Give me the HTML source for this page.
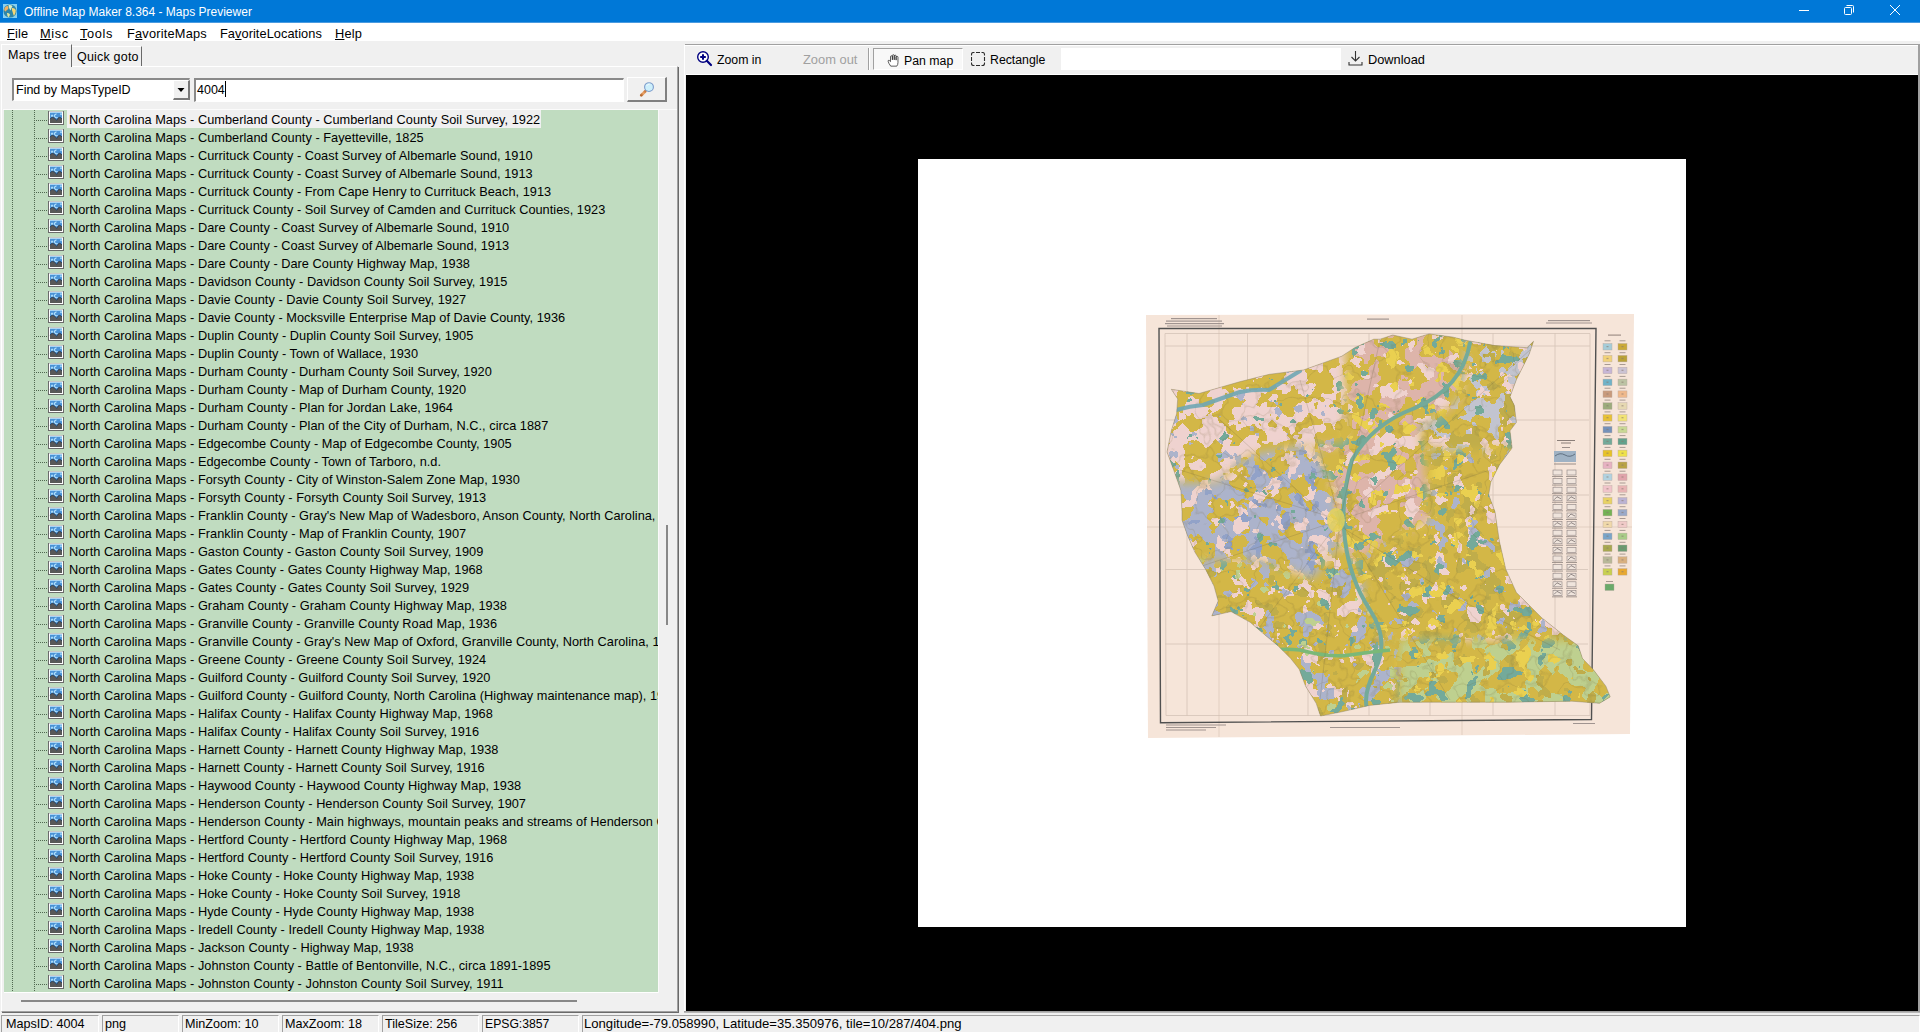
<!DOCTYPE html>
<html><head><meta charset="utf-8"><title>Offline Map Maker</title>
<style>
*{margin:0;padding:0;box-sizing:border-box}
html,body{width:1920px;height:1032px;overflow:hidden;background:#f0f0f0;font-family:"Liberation Sans",sans-serif;color:#000;position:relative}
.a{position:absolute}
.nw{white-space:nowrap}
#title{left:0;top:0;width:1920px;height:22px;background:#0078d7;color:#fff;font-size:12px}
#menu{left:0;top:23px;width:1920px;height:18px;background:#fff;font-size:12.8px;letter-spacing:0.2px}
#menu span{position:absolute;top:3px;white-space:nowrap}
.tb{font-size:12.3px;white-space:nowrap;position:absolute}
#tree{left:4px;top:110px;width:654px;height:882px;background:#c0dcc0;overflow:hidden}
.row{position:absolute;left:0;width:654px;height:18px}
.row .tx{position:absolute;left:65px;top:2px;font-size:12.75px;letter-spacing:0.03px;white-space:nowrap;line-height:15px}
.row .hl{position:absolute;left:63px;top:0;width:474px;height:18px;background:#f0f0f0}
.row .hd{position:absolute;left:32px;top:10px;width:11px;height:1px;background:repeating-linear-gradient(90deg,#506850 0 1px,transparent 1px 2px)}
.vd{position:absolute;top:0;width:1px;height:882px;background:repeating-linear-gradient(180deg,#506850 0 1px,transparent 1px 2px)}
.ic{position:absolute;left:44px;top:1px;width:16px;height:14px}
.st{position:absolute;top:1015px;height:17px;border-top:1px solid #a0a0a0;border-left:1px solid #a0a0a0;border-right:1px solid #fff;font-size:12.5px;white-space:nowrap}
.st span{position:absolute;left:5px;top:2px}
</style></head><body>
<svg width="0" height="0" style="position:absolute"><defs>
<symbol id="mi" viewBox="0 0 16 14">
<rect x="0" y="0" width="16" height="14" fill="#6a6a6a"/>
<rect x="1" y="0" width="14" height="1" fill="#c8c8c8"/>
<rect x="1" y="1" width="14" height="12" fill="#fff"/>
<rect x="2" y="1" width="12" height="11" fill="#4a92d6"/>
<rect x="2" y="1" width="12" height="1" fill="#a8d4f4"/>
<path d="M4.1 3.6 V6 M2.9 4.8 H5.3" stroke="#b8e6ff" stroke-width="1"/>
<path d="M8.6 3 a1.9 1.9 0 1 0 1 3.4" stroke="#b8e6ff" stroke-width="1.1" fill="none"/>
<path d="M13 2.2 V4.2 M12 3.2 H14" stroke="#b8e6ff" stroke-width="0.8"/>
<path d="M2 12 V8.2 Q3.2 6.3 4.6 6.3 Q6.5 6.5 8.9 9.4 Q10 6.4 11.4 6.3 Q13 6.5 14 8 V12 Z" fill="#585858"/><path d="M2 8.2 Q3.2 6.3 4.6 6.3 Q6.5 6.5 8.9 9.4 Q10 6.4 11.4 6.3 Q13 6.5 14 8" fill="none" stroke="#203048" stroke-width="0.7"/>
</symbol>
</defs></svg>
<div id="title" class="a"><div class="a" style="left:0;top:22px;width:1920px;height:1px;background:#4a9be0"></div>
<svg class="a" style="left:3px;top:4px" width="14" height="14" viewBox="0 0 14 14">
<rect x="0" y="0" width="14" height="14" fill="#86d0f2"/>
<circle cx="7" cy="7" r="6.6" fill="#2f86a8"/>
<path d="M1.2 5 Q2 2.2 4.5 1.8 Q6 3 5.2 5 Q3.5 6 2.5 7.5 Q1.3 7 1.2 5Z" fill="#f0b060"/>
<path d="M5.5 1 Q8 0.6 9.5 2 Q8.5 4 7.5 6.5 Q6.5 5 5.8 3Z" fill="#d8eec8"/>
<path d="M9 4 Q11.5 3.5 12.8 6 Q13 9.5 11 12 Q10 10 9.6 8 Q8.6 6 9 4Z" fill="#f3d676"/>
<path d="M4 9 Q6 8.5 7 10.5 Q6.5 12.5 5.5 13.3 Q4 12 4 9Z" fill="#e2e6a0"/>
</svg>
<div class="a nw" style="left:24px;top:5px;font-size:12px;line-height:14px">Offline Map Maker 8.364 - Maps Previewer</div>
<svg class="a" style="left:1792px;top:0" width="128" height="22" viewBox="0 0 128 22">
<rect x="7" y="10" width="10" height="1" fill="#fff"/>
<rect x="52.5" y="7.5" width="7" height="7" fill="none" stroke="#fff" rx="1"/>
<path d="M54.5 5.5 H60.5 Q61.5 5.5 61.5 6.5 V12.5" fill="none" stroke="#fff"/>
<path d="M98 5 L108 15 M108 5 L98 15" stroke="#fff" stroke-width="1"/>
</svg>
</div>
<div id="menu" class="a">
<span style="left:7px"><u>F</u>ile</span>
<span style="left:40px;letter-spacing:0.6px"><u>M</u>isc</span>
<span style="left:80px;letter-spacing:0.6px"><u>T</u>ools</span>
<span style="left:127px">F<u>a</u>voriteMaps</span>
<span style="left:220px;letter-spacing:0.05px">Fa<u>v</u>oriteLocations</span>
<span style="left:335px"><u>H</u>elp</span>
</div>

<div class="a" style="left:0;top:41px;width:1920px;height:4px;background:#f0f0f0"></div>
<!-- tab page frame -->
<div class="a" style="left:1px;top:66px;width:677px;height:946px;border-top:1px solid #fff;border-left:1px solid #fff;border-right:1px solid #a0a0a0;border-bottom:1px solid #a0a0a0;box-shadow:1px 1px 0 #6a6a6a"></div>
<!-- active tab -->
<div class="a" style="left:1px;top:44px;width:71px;height:23px;background:#f0f0f0;border-top:1px solid #fff;border-left:1px solid #fff;border-right:1px solid #696969"></div>
<div class="a nw" style="left:8px;top:48px;font-size:12.5px;letter-spacing:0.35px;line-height:14px">Maps tree</div>
<!-- inactive tab -->
<div class="a" style="left:72px;top:46px;width:70px;height:20px;background:#f0f0f0;border-top:1px solid #fff;border-right:1px solid #696969;border-right-width:1px"></div>
<div class="a nw" style="left:77px;top:50px;font-size:12.5px;letter-spacing:0.2px;line-height:14px">Quick goto</div>
<!-- combo -->
<div class="a" style="left:12px;top:78px;width:178px;height:23px;background:#fff;border-top:2px solid #8a8a8a;border-left:2px solid #8a8a8a;border-bottom:1px solid #fff;border-right:1px solid #e8e8e8"></div>
<div class="a nw" style="left:16px;top:83px;font-size:12.5px;line-height:14px">Find by MapsTypeID</div>
<div class="a" style="left:173px;top:80px;width:17px;height:20px;background:#f0f0f0;border-top:1px solid #fff;border-left:1px solid #fff;border-right:2px solid #787878;border-bottom:2px solid #787878"></div>
<svg class="a" style="left:177px;top:88px" width="8" height="4" viewBox="0 0 8 4"><path d="M0.5 0 H7.5 L4 4Z" fill="#000"/></svg>
<!-- edit -->
<div class="a" style="left:194px;top:78px;width:430px;height:24px;background:#fff;border-top:2px solid #8a8a8a;border-left:2px solid #8a8a8a;border-bottom:1px solid #fff;border-right:1px solid #fff"></div>
<div class="a nw" style="left:197px;top:83px;font-size:12.5px;line-height:14px">4004</div>
<div class="a" style="left:225px;top:81px;width:1px;height:16px;background:#000"></div>
<!-- search button -->
<div class="a" style="left:627px;top:77px;width:40px;height:25px;background:#f0f0f0;border-top:1px solid #fff;border-left:1px solid #fff;border-right:2px solid #808080;border-bottom:2px solid #808080"></div>
<svg class="a" style="left:638px;top:81px" width="18" height="18" viewBox="0 0 18 18">
<defs><linearGradient id="hg" x1="0" y1="1" x2="1" y2="0"><stop offset="0" stop-color="#b86a30"/><stop offset="0.5" stop-color="#eca468"/><stop offset="1" stop-color="#c87a40"/></linearGradient></defs>
<path d="M3.3 14.3 L7.3 10.3" stroke="url(#hg)" stroke-width="2.8" stroke-linecap="round"/>
<circle cx="11" cy="6.1" r="4.4" fill="#cdeffb" stroke="#7b9bcb" stroke-width="1.1"/>
<path d="M8.6 5 Q9.5 3 11.8 3" stroke="#fff" stroke-width="0.9" fill="none" opacity="0.7"/>
</svg>

<div id="tree" class="a">
<div class="vd" style="left:8px"></div><div class="vd" style="left:30px"></div>
<div class="row" style="top:0px"><div class="hl"></div><div class="hd"></div><svg class="ic" width="16" height="14" viewBox="0 0 16 14"><use href="#mi"/></svg><div class="tx">North Carolina Maps - Cumberland County - Cumberland County Soil Survey, 1922</div></div>
<div class="row" style="top:18px"><div class="hd"></div><svg class="ic" width="16" height="14" viewBox="0 0 16 14"><use href="#mi"/></svg><div class="tx">North Carolina Maps - Cumberland County - Fayetteville, 1825</div></div>
<div class="row" style="top:36px"><div class="hd"></div><svg class="ic" width="16" height="14" viewBox="0 0 16 14"><use href="#mi"/></svg><div class="tx">North Carolina Maps - Currituck County - Coast Survey of Albemarle Sound, 1910</div></div>
<div class="row" style="top:54px"><div class="hd"></div><svg class="ic" width="16" height="14" viewBox="0 0 16 14"><use href="#mi"/></svg><div class="tx">North Carolina Maps - Currituck County - Coast Survey of Albemarle Sound, 1913</div></div>
<div class="row" style="top:72px"><div class="hd"></div><svg class="ic" width="16" height="14" viewBox="0 0 16 14"><use href="#mi"/></svg><div class="tx">North Carolina Maps - Currituck County - From Cape Henry to Currituck Beach, 1913</div></div>
<div class="row" style="top:90px"><div class="hd"></div><svg class="ic" width="16" height="14" viewBox="0 0 16 14"><use href="#mi"/></svg><div class="tx">North Carolina Maps - Currituck County - Soil Survey of Camden and Currituck Counties, 1923</div></div>
<div class="row" style="top:108px"><div class="hd"></div><svg class="ic" width="16" height="14" viewBox="0 0 16 14"><use href="#mi"/></svg><div class="tx">North Carolina Maps - Dare County - Coast Survey of Albemarle Sound, 1910</div></div>
<div class="row" style="top:126px"><div class="hd"></div><svg class="ic" width="16" height="14" viewBox="0 0 16 14"><use href="#mi"/></svg><div class="tx">North Carolina Maps - Dare County - Coast Survey of Albemarle Sound, 1913</div></div>
<div class="row" style="top:144px"><div class="hd"></div><svg class="ic" width="16" height="14" viewBox="0 0 16 14"><use href="#mi"/></svg><div class="tx">North Carolina Maps - Dare County - Dare County Highway Map, 1938</div></div>
<div class="row" style="top:162px"><div class="hd"></div><svg class="ic" width="16" height="14" viewBox="0 0 16 14"><use href="#mi"/></svg><div class="tx">North Carolina Maps - Davidson County - Davidson County Soil Survey, 1915</div></div>
<div class="row" style="top:180px"><div class="hd"></div><svg class="ic" width="16" height="14" viewBox="0 0 16 14"><use href="#mi"/></svg><div class="tx">North Carolina Maps - Davie County - Davie County Soil Survey, 1927</div></div>
<div class="row" style="top:198px"><div class="hd"></div><svg class="ic" width="16" height="14" viewBox="0 0 16 14"><use href="#mi"/></svg><div class="tx">North Carolina Maps - Davie County - Mocksville Enterprise Map of Davie County, 1936</div></div>
<div class="row" style="top:216px"><div class="hd"></div><svg class="ic" width="16" height="14" viewBox="0 0 16 14"><use href="#mi"/></svg><div class="tx">North Carolina Maps - Duplin County - Duplin County Soil Survey, 1905</div></div>
<div class="row" style="top:234px"><div class="hd"></div><svg class="ic" width="16" height="14" viewBox="0 0 16 14"><use href="#mi"/></svg><div class="tx">North Carolina Maps - Duplin County - Town of Wallace, 1930</div></div>
<div class="row" style="top:252px"><div class="hd"></div><svg class="ic" width="16" height="14" viewBox="0 0 16 14"><use href="#mi"/></svg><div class="tx">North Carolina Maps - Durham County - Durham County Soil Survey, 1920</div></div>
<div class="row" style="top:270px"><div class="hd"></div><svg class="ic" width="16" height="14" viewBox="0 0 16 14"><use href="#mi"/></svg><div class="tx">North Carolina Maps - Durham County - Map of Durham County, 1920</div></div>
<div class="row" style="top:288px"><div class="hd"></div><svg class="ic" width="16" height="14" viewBox="0 0 16 14"><use href="#mi"/></svg><div class="tx">North Carolina Maps - Durham County - Plan for Jordan Lake, 1964</div></div>
<div class="row" style="top:306px"><div class="hd"></div><svg class="ic" width="16" height="14" viewBox="0 0 16 14"><use href="#mi"/></svg><div class="tx">North Carolina Maps - Durham County - Plan of the City of Durham, N.C., circa 1887</div></div>
<div class="row" style="top:324px"><div class="hd"></div><svg class="ic" width="16" height="14" viewBox="0 0 16 14"><use href="#mi"/></svg><div class="tx">North Carolina Maps - Edgecombe County - Map of Edgecombe County, 1905</div></div>
<div class="row" style="top:342px"><div class="hd"></div><svg class="ic" width="16" height="14" viewBox="0 0 16 14"><use href="#mi"/></svg><div class="tx">North Carolina Maps - Edgecombe County - Town of Tarboro, n.d.</div></div>
<div class="row" style="top:360px"><div class="hd"></div><svg class="ic" width="16" height="14" viewBox="0 0 16 14"><use href="#mi"/></svg><div class="tx">North Carolina Maps - Forsyth County - City of Winston-Salem Zone Map, 1930</div></div>
<div class="row" style="top:378px"><div class="hd"></div><svg class="ic" width="16" height="14" viewBox="0 0 16 14"><use href="#mi"/></svg><div class="tx">North Carolina Maps - Forsyth County - Forsyth County Soil Survey, 1913</div></div>
<div class="row" style="top:396px"><div class="hd"></div><svg class="ic" width="16" height="14" viewBox="0 0 16 14"><use href="#mi"/></svg><div class="tx">North Carolina Maps - Franklin County - Gray&#x27;s New Map of Wadesboro, Anson County, North Carolina, 1881</div></div>
<div class="row" style="top:414px"><div class="hd"></div><svg class="ic" width="16" height="14" viewBox="0 0 16 14"><use href="#mi"/></svg><div class="tx">North Carolina Maps - Franklin County - Map of Franklin County, 1907</div></div>
<div class="row" style="top:432px"><div class="hd"></div><svg class="ic" width="16" height="14" viewBox="0 0 16 14"><use href="#mi"/></svg><div class="tx">North Carolina Maps - Gaston County - Gaston County Soil Survey, 1909</div></div>
<div class="row" style="top:450px"><div class="hd"></div><svg class="ic" width="16" height="14" viewBox="0 0 16 14"><use href="#mi"/></svg><div class="tx">North Carolina Maps - Gates County - Gates County Highway Map, 1968</div></div>
<div class="row" style="top:468px"><div class="hd"></div><svg class="ic" width="16" height="14" viewBox="0 0 16 14"><use href="#mi"/></svg><div class="tx">North Carolina Maps - Gates County - Gates County Soil Survey, 1929</div></div>
<div class="row" style="top:486px"><div class="hd"></div><svg class="ic" width="16" height="14" viewBox="0 0 16 14"><use href="#mi"/></svg><div class="tx">North Carolina Maps - Graham County - Graham County Highway Map, 1938</div></div>
<div class="row" style="top:504px"><div class="hd"></div><svg class="ic" width="16" height="14" viewBox="0 0 16 14"><use href="#mi"/></svg><div class="tx">North Carolina Maps - Granville County - Granville County Road Map, 1936</div></div>
<div class="row" style="top:522px"><div class="hd"></div><svg class="ic" width="16" height="14" viewBox="0 0 16 14"><use href="#mi"/></svg><div class="tx">North Carolina Maps - Granville County - Gray&#x27;s New Map of Oxford, Granville County, North Carolina, 1882</div></div>
<div class="row" style="top:540px"><div class="hd"></div><svg class="ic" width="16" height="14" viewBox="0 0 16 14"><use href="#mi"/></svg><div class="tx">North Carolina Maps - Greene County - Greene County Soil Survey, 1924</div></div>
<div class="row" style="top:558px"><div class="hd"></div><svg class="ic" width="16" height="14" viewBox="0 0 16 14"><use href="#mi"/></svg><div class="tx">North Carolina Maps - Guilford County - Guilford County Soil Survey, 1920</div></div>
<div class="row" style="top:576px"><div class="hd"></div><svg class="ic" width="16" height="14" viewBox="0 0 16 14"><use href="#mi"/></svg><div class="tx">North Carolina Maps - Guilford County - Guilford County, North Carolina (Highway maintenance map), 1930</div></div>
<div class="row" style="top:594px"><div class="hd"></div><svg class="ic" width="16" height="14" viewBox="0 0 16 14"><use href="#mi"/></svg><div class="tx">North Carolina Maps - Halifax County - Halifax County Highway Map, 1968</div></div>
<div class="row" style="top:612px"><div class="hd"></div><svg class="ic" width="16" height="14" viewBox="0 0 16 14"><use href="#mi"/></svg><div class="tx">North Carolina Maps - Halifax County - Halifax County Soil Survey, 1916</div></div>
<div class="row" style="top:630px"><div class="hd"></div><svg class="ic" width="16" height="14" viewBox="0 0 16 14"><use href="#mi"/></svg><div class="tx">North Carolina Maps - Harnett County - Harnett County Highway Map, 1938</div></div>
<div class="row" style="top:648px"><div class="hd"></div><svg class="ic" width="16" height="14" viewBox="0 0 16 14"><use href="#mi"/></svg><div class="tx">North Carolina Maps - Harnett County - Harnett County Soil Survey, 1916</div></div>
<div class="row" style="top:666px"><div class="hd"></div><svg class="ic" width="16" height="14" viewBox="0 0 16 14"><use href="#mi"/></svg><div class="tx">North Carolina Maps - Haywood County - Haywood County Highway Map, 1938</div></div>
<div class="row" style="top:684px"><div class="hd"></div><svg class="ic" width="16" height="14" viewBox="0 0 16 14"><use href="#mi"/></svg><div class="tx">North Carolina Maps - Henderson County - Henderson County Soil Survey, 1907</div></div>
<div class="row" style="top:702px"><div class="hd"></div><svg class="ic" width="16" height="14" viewBox="0 0 16 14"><use href="#mi"/></svg><div class="tx">North Carolina Maps - Henderson County - Main highways, mountain peaks and streams of Henderson County</div></div>
<div class="row" style="top:720px"><div class="hd"></div><svg class="ic" width="16" height="14" viewBox="0 0 16 14"><use href="#mi"/></svg><div class="tx">North Carolina Maps - Hertford County - Hertford County Highway Map, 1968</div></div>
<div class="row" style="top:738px"><div class="hd"></div><svg class="ic" width="16" height="14" viewBox="0 0 16 14"><use href="#mi"/></svg><div class="tx">North Carolina Maps - Hertford County - Hertford County Soil Survey, 1916</div></div>
<div class="row" style="top:756px"><div class="hd"></div><svg class="ic" width="16" height="14" viewBox="0 0 16 14"><use href="#mi"/></svg><div class="tx">North Carolina Maps - Hoke County - Hoke County Highway Map, 1938</div></div>
<div class="row" style="top:774px"><div class="hd"></div><svg class="ic" width="16" height="14" viewBox="0 0 16 14"><use href="#mi"/></svg><div class="tx">North Carolina Maps - Hoke County - Hoke County Soil Survey, 1918</div></div>
<div class="row" style="top:792px"><div class="hd"></div><svg class="ic" width="16" height="14" viewBox="0 0 16 14"><use href="#mi"/></svg><div class="tx">North Carolina Maps - Hyde County - Hyde County Highway Map, 1938</div></div>
<div class="row" style="top:810px"><div class="hd"></div><svg class="ic" width="16" height="14" viewBox="0 0 16 14"><use href="#mi"/></svg><div class="tx">North Carolina Maps - Iredell County - Iredell County Highway Map, 1938</div></div>
<div class="row" style="top:828px"><div class="hd"></div><svg class="ic" width="16" height="14" viewBox="0 0 16 14"><use href="#mi"/></svg><div class="tx">North Carolina Maps - Jackson County - Highway Map, 1938</div></div>
<div class="row" style="top:846px"><div class="hd"></div><svg class="ic" width="16" height="14" viewBox="0 0 16 14"><use href="#mi"/></svg><div class="tx">North Carolina Maps - Johnston County - Battle of Bentonville, N.C., circa 1891-1895</div></div>
<div class="row" style="top:864px"><div class="hd"></div><svg class="ic" width="16" height="14" viewBox="0 0 16 14"><use href="#mi"/></svg><div class="tx">North Carolina Maps - Johnston County - Johnston County Soil Survey, 1911</div></div>
</div>

<!-- tree extra borders -->
<div class="a" style="left:3px;top:109px;width:674px;height:1px;background:#fbfbfb"></div>
<div class="a" style="left:4px;top:992px;width:655px;height:1px;background:#fff"></div>
<div class="a" style="left:658px;top:110px;width:1px;height:883px;background:#fafafa"></div>
<!-- vscroll thumb -->
<div class="a" style="left:666px;top:525px;width:2px;height:100px;background:#888"></div>
<!-- hscroll thumb -->
<div class="a" style="left:21px;top:1000px;width:556px;height:2px;background:#888"></div>
<!-- toolbar -->
<div class="a" style="left:685px;top:44px;width:1234px;height:1px;background:#a0a0a0"></div>
<div class="a" style="left:685px;top:45px;width:1234px;height:1px;background:#fff"></div>
<div class="a" style="left:684px;top:45px;width:1px;height:967px;background:#fff"></div>
<div class="a" style="left:686px;top:74px;width:1232px;height:1px;background:#fff"></div>
<div class="a" style="left:1918px;top:44px;width:2px;height:968px;background:#a0a0a0"></div>
<svg class="a" style="left:696px;top:50px" width="18" height="18" viewBox="0 0 18 18">
<circle cx="7" cy="7" r="5.3" fill="#fff" stroke="#000080" stroke-width="1.4"/>
<path d="M4.2 7 H9.8 M7 4.2 V9.8" stroke="#000080" stroke-width="2"/>
<path d="M10.8 10.8 L15 15" stroke="#000080" stroke-width="2.2" stroke-linecap="round"/>
</svg>
<div class="tb" style="left:717px;top:53px">Zoom in</div>
<div class="tb" style="left:803px;top:52px;color:#a0a0a0;font-size:12.9px">Zoom out</div>
<div class="a" style="left:868px;top:48px;width:1px;height:22px;background:#a0a0a0"></div>
<div class="a" style="left:869px;top:48px;width:1px;height:22px;background:#fff"></div>
<!-- pressed pan button -->
<div class="a" style="left:873px;top:48px;width:90px;height:22px;background:#f8f8f8;border-top:1px solid #a0a0a0;border-left:1px solid #a0a0a0;border-right:1px solid #fff;border-bottom:1px solid #fff"></div>
<svg class="a" style="left:886.5px;top:54px" width="13" height="13.5" viewBox="0 0 14 15" preserveAspectRatio="none">
<path d="M4 13.5 Q1.5 10 1.2 8 Q1 6.8 2.3 7 L3.8 8.5 V3 Q3.8 2 4.8 2 Q5.8 2 5.8 3 V6.5 V1.8 Q5.8 0.8 6.8 0.8 Q7.8 0.8 7.8 1.8 V6.5 V2.3 Q7.8 1.3 8.8 1.3 Q9.8 1.3 9.8 2.3 V6.8 V3.5 Q9.8 2.6 10.8 2.6 Q11.8 2.6 11.8 3.5 V9.5 Q11.8 12 10.5 13.5 Z" fill="#fff" stroke="#222" stroke-width="0.8"/>
</svg>
<div class="tb" style="left:904px;top:54px">Pan map</div>
<svg class="a" style="left:971px;top:52px" width="15" height="15" viewBox="0 0 15 15">
<path d="M0.5 3.5 V2.5 Q0.5 0.5 2.5 0.5 H3.5 M10.5 0.5 H11.5 Q13.5 0.5 13.5 2.5 V3.5 M13.5 10.5 V11.5 Q13.5 13.5 11.5 13.5 H10.5 M3.5 13.5 H2.5 Q0.5 13.5 0.5 11.5 V10.5 M5 0.5 H9 M13.5 5 V9 M5 13.5 H9 M0.5 5 V9" fill="none" stroke="#2a2a2a" stroke-width="1.1"/>
</svg>
<div class="tb" style="left:990px;top:53px">Rectangle</div>
<div class="a" style="left:1061px;top:48px;width:280px;height:22px;background:#fff"></div>
<svg class="a" style="left:1348px;top:50px" width="16" height="17" viewBox="0 0 16 17">
<path d="M7.5 1 V11 M3.5 7 L7.5 11 L11.5 7" stroke="#333" stroke-width="1.1" fill="none"/>
<path d="M1 12 V15 H14 V12" stroke="#333" stroke-width="1.1" fill="none"/>
</svg>
<div class="tb" style="left:1368px;top:52px;font-size:12.8px">Download</div>
<!-- map canvas -->
<div class="a" style="left:686px;top:75px;width:1232px;height:936px;background:#000"></div>
<div class="a" style="left:684px;top:1011px;width:1236px;height:1px;background:#a0a0a0"></div>
<div class="a" style="left:918px;top:159px;width:768px;height:768px;background:#fff"></div>

<div class="a" style="left:684px;top:1012px;width:1236px;height:1px;background:#b8b8b8"></div>
<div class="st" style="left:1px;width:98px;font-size:12.6px"><span style="line-height:14px;left:4px;top:1px">MapsID: 4004</span></div>
<div class="st" style="left:102px;width:77px;font-size:12.6px"><span style="line-height:14px;left:2px;top:1px">png</span></div>
<div class="st" style="left:182px;width:97px;font-size:12.6px"><span style="line-height:14px;left:2px;top:1px">MinZoom: 10</span></div>
<div class="st" style="left:282px;width:97px;font-size:12.6px"><span style="line-height:14px;left:2px;top:1px">MaxZoom: 18</span></div>
<div class="st" style="left:382px;width:97px;font-size:12.6px"><span style="line-height:14px;left:2px;top:1px">TileSize: 256</span></div>
<div class="st" style="left:482px;width:97px;font-size:12.2px"><span style="line-height:14px;left:2px;top:1px">EPSG:3857</span></div>
<div class="st" style="left:582px;width:1338px;font-size:13.1px"><span style="line-height:14px;left:1px;top:1px">Longitude=-79.058990, Latitude=35.350976, tile=10/287/404.png</span></div>
<svg class="a" style="left:918px;top:159px" width="768" height="768" viewBox="918 159 768 768">
<defs><clipPath id="cc"><polygon points="1171.3,389.3 1199.0,393.5 1239.5,381.8 1269.4,374.3 1303.5,370.0 1341.8,356.2 1354.6,347.7 1373.8,339.2 1380.0,339.2 1392.8,335.0 1412.0,339.2 1429.0,333.9 1452.5,337.0 1465.3,340.2 1495.0,345.6 1527.0,347.7 1533.5,341.3 1529.2,354.1 1516.4,379.7 1510.0,396.7 1514.3,405.3 1516.4,422.3 1510.0,430.8 1512.1,447.9 1499.4,464.9 1490.8,482.0 1488.7,494.8 1495.0,511.8 1499.4,541.3 1505.7,569.0 1516.4,592.5 1529.2,605.3 1542.0,618.0 1563.3,635.0 1578.2,645.7 1582.5,658.5 1593.0,669.2 1605.9,686.2 1610.2,696.9 1599.5,703.3 1571.8,701.2 1507.9,702.2 1443.9,702.2 1400.0,702.2 1369.5,705.4 1341.8,711.8 1320.5,716.0 1316.2,703.3 1305.6,686.2 1299.2,669.2 1290.7,658.5 1277.9,645.7 1265.0,635.0 1250.2,622.3 1231.0,611.6 1211.8,615.9 1218.2,601.0 1214.0,586.0 1205.4,569.0 1194.8,552.0 1187.3,534.9 1182.0,520.0 1182.0,511.8 1180.9,490.5 1173.4,469.2 1167.0,452.0 1171.3,430.8 1176.6,413.8 1177.7,398.9"/></clipPath><filter id="bl" x="1100" y="300" width="560" height="460" filterUnits="userSpaceOnUse"><feGaussianBlur stdDeviation="5"/></filter><mask id="znw" maskUnits="userSpaceOnUse" x="1100" y="300" width="560" height="460"><polygon points="1160.0,330.0 1345.0,330.0 1345.0,445.0 1300.0,448.0 1250.0,455.0 1217.0,483.0 1160.0,483.0" fill="#fff" filter="url(#bl)"/></mask><mask id="zgray" maskUnits="userSpaceOnUse" x="1100" y="300" width="560" height="460"><polygon points="1160.0,483.0 1217.0,483.0 1250.0,455.0 1313.0,444.0 1335.0,492.0 1339.0,544.0 1313.0,579.0 1261.0,561.0 1160.0,560.0" fill="#fff" filter="url(#bl)"/></mask><mask id="zsw" maskUnits="userSpaceOnUse" x="1100" y="300" width="560" height="460"><polygon points="1160.0,560.0 1261.0,561.0 1313.0,579.0 1339.0,544.0 1355.0,560.0 1380.0,640.0 1400.0,640.0 1400.0,725.0 1160.0,725.0" fill="#fff" filter="url(#bl)"/></mask><mask id="zcn" maskUnits="userSpaceOnUse" x="1100" y="300" width="560" height="460"><polygon points="1345.0,330.0 1470.0,330.0 1460.0,400.0 1420.0,430.0 1430.0,520.0 1355.0,560.0 1339.0,544.0 1335.0,492.0 1313.0,444.0 1345.0,445.0" fill="#fff" filter="url(#bl)"/></mask><mask id="zne" maskUnits="userSpaceOnUse" x="1100" y="300" width="560" height="460"><polygon points="1470.0,330.0 1620.0,330.0 1620.0,450.0 1430.0,450.0 1420.0,430.0 1460.0,400.0" fill="#fff" filter="url(#bl)"/></mask><mask id="ze" maskUnits="userSpaceOnUse" x="1100" y="300" width="560" height="460"><polygon points="1430.0,450.0 1620.0,450.0 1620.0,640.0 1400.0,640.0 1380.0,640.0 1355.0,560.0 1430.0,520.0" fill="#fff" filter="url(#bl)"/></mask><mask id="zse" maskUnits="userSpaceOnUse" x="1100" y="300" width="560" height="460"><polygon points="1400.0,640.0 1620.0,640.0 1620.0,725.0 1400.0,725.0" fill="#fff" filter="url(#bl)"/></mask><filter id="ct" x="1150" y="320" width="480" height="410" filterUnits="userSpaceOnUse" color-interpolation-filters="sRGB"><feTurbulence type="fractalNoise" baseFrequency="0.035" numOctaves="3" seed="99"/><feColorMatrix type="matrix" values="0 0 0 0 0.45 0 0 0 0 0.40 0 0 0 0 0.22 1 0 0 0 0"/><feComponentTransfer><feFuncA type="table" tableValues="0 0 0 0 0 0 0 0 0 0 0 0 0 0 0 1 0 0 0 0 0 0 0 0 0 0 0 0 0 0"/></feComponentTransfer></filter><filter id="ct2" x="1150" y="320" width="480" height="410" filterUnits="userSpaceOnUse" color-interpolation-filters="sRGB"><feTurbulence type="fractalNoise" baseFrequency="0.06" numOctaves="2" seed="57"/><feColorMatrix type="matrix" values="0 0 0 0 0.42 0 0 0 0 0.45 0 0 0 0 0.55 1 0 0 0 0"/><feComponentTransfer><feFuncA type="table" tableValues="0 0 0 0 0 0 0 0 0 0 0.8 0 0 0 0 0 0 0 0 0 0"/></feComponentTransfer></filter><filter id="f0" x="1150" y="320" width="480" height="410" filterUnits="userSpaceOnUse" color-interpolation-filters="sRGB"><feTurbulence type="fractalNoise" baseFrequency="0.054" numOctaves="3" seed="11"/><feColorMatrix type="matrix" values="0 0 0 0 0.937 0 0 0 0 0.824 0 0 0 0 0.812 8 0 0 0 -3.374"/><feComponentTransfer><feFuncA type="discrete" tableValues="0 1"/></feComponentTransfer></filter><filter id="f1" x="1150" y="320" width="480" height="410" filterUnits="userSpaceOnUse" color-interpolation-filters="sRGB"><feTurbulence type="fractalNoise" baseFrequency="0.06" numOctaves="3" seed="13"/><feColorMatrix type="matrix" values="0 0 0 0 0.675 0 0 0 0 0.702 0 0 0 0 0.796 8 0 0 0 -5.055"/><feComponentTransfer><feFuncA type="discrete" tableValues="0 1"/></feComponentTransfer></filter><filter id="f2" x="1150" y="320" width="480" height="410" filterUnits="userSpaceOnUse" color-interpolation-filters="sRGB"><feTurbulence type="fractalNoise" baseFrequency="0.06" numOctaves="3" seed="12"/><feColorMatrix type="matrix" values="0 0 0 0 0.455 0 0 0 0 0.667 0 0 0 0 0.604 8 0 0 0 -5.251"/><feComponentTransfer><feFuncA type="discrete" tableValues="0 1"/></feComponentTransfer></filter><filter id="f3" x="1150" y="320" width="480" height="410" filterUnits="userSpaceOnUse" color-interpolation-filters="sRGB"><feTurbulence type="fractalNoise" baseFrequency="0.048" numOctaves="3" seed="21"/><feColorMatrix type="matrix" values="0 0 0 0 0.675 0 0 0 0 0.702 0 0 0 0 0.796 8 0 0 0 -3.298"/><feComponentTransfer><feFuncA type="discrete" tableValues="0 1"/></feComponentTransfer></filter><filter id="f4" x="1150" y="320" width="480" height="410" filterUnits="userSpaceOnUse" color-interpolation-filters="sRGB"><feTurbulence type="fractalNoise" baseFrequency="0.06" numOctaves="3" seed="22"/><feColorMatrix type="matrix" values="0 0 0 0 0.937 0 0 0 0 0.824 0 0 0 0 0.812 8 0 0 0 -4.415"/><feComponentTransfer><feFuncA type="discrete" tableValues="0 1"/></feComponentTransfer></filter><filter id="f5" x="1150" y="320" width="480" height="410" filterUnits="userSpaceOnUse" color-interpolation-filters="sRGB"><feTurbulence type="fractalNoise" baseFrequency="0.072" numOctaves="3" seed="23"/><feColorMatrix type="matrix" values="0 0 0 0 0.573 0 0 0 0 0.635 0 0 0 0 0.784 8 0 0 0 -4.905"/><feComponentTransfer><feFuncA type="discrete" tableValues="0 1"/></feComponentTransfer></filter><filter id="f6" x="1150" y="320" width="480" height="410" filterUnits="userSpaceOnUse" color-interpolation-filters="sRGB"><feTurbulence type="fractalNoise" baseFrequency="0.06" numOctaves="3" seed="24"/><feColorMatrix type="matrix" values="0 0 0 0 0.455 0 0 0 0 0.667 0 0 0 0 0.604 8 0 0 0 -5.381"/><feComponentTransfer><feFuncA type="discrete" tableValues="0 1"/></feComponentTransfer></filter><filter id="f7" x="1150" y="320" width="480" height="410" filterUnits="userSpaceOnUse" color-interpolation-filters="sRGB"><feTurbulence type="fractalNoise" baseFrequency="0.06" numOctaves="3" seed="31"/><feColorMatrix type="matrix" values="0 0 0 0 0.937 0 0 0 0 0.824 0 0 0 0 0.812 8 0 0 0 -4.342"/><feComponentTransfer><feFuncA type="discrete" tableValues="0 1"/></feComponentTransfer></filter><filter id="f8" x="1150" y="320" width="480" height="410" filterUnits="userSpaceOnUse" color-interpolation-filters="sRGB"><feTurbulence type="fractalNoise" baseFrequency="0.054" numOctaves="3" seed="32"/><feColorMatrix type="matrix" values="0 0 0 0 0.675 0 0 0 0 0.702 0 0 0 0 0.796 8 0 0 0 -4.494"/><feComponentTransfer><feFuncA type="discrete" tableValues="0 1"/></feComponentTransfer></filter><filter id="f9" x="1150" y="320" width="480" height="410" filterUnits="userSpaceOnUse" color-interpolation-filters="sRGB"><feTurbulence type="fractalNoise" baseFrequency="0.06" numOctaves="3" seed="35"/><feColorMatrix type="matrix" values="0 0 0 0 0.753 0 0 0 0 0.678 0 0 0 0 0.290 8 0 0 0 -4.905"/><feComponentTransfer><feFuncA type="discrete" tableValues="0 1"/></feComponentTransfer></filter><filter id="f10" x="1150" y="320" width="480" height="410" filterUnits="userSpaceOnUse" color-interpolation-filters="sRGB"><feTurbulence type="fractalNoise" baseFrequency="0.06" numOctaves="3" seed="33"/><feColorMatrix type="matrix" values="0 0 0 0 0.455 0 0 0 0 0.667 0 0 0 0 0.604 8 0 0 0 -5.055"/><feComponentTransfer><feFuncA type="discrete" tableValues="0 1"/></feComponentTransfer></filter><filter id="f11" x="1150" y="320" width="480" height="410" filterUnits="userSpaceOnUse" color-interpolation-filters="sRGB"><feTurbulence type="fractalNoise" baseFrequency="0.06" numOctaves="3" seed="34"/><feColorMatrix type="matrix" values="0 0 0 0 0.745 0 0 0 0 0.816 0 0 0 0 0.561 8 0 0 0 -5.251"/><feComponentTransfer><feFuncA type="discrete" tableValues="0 1"/></feComponentTransfer></filter><filter id="f12" x="1150" y="320" width="480" height="410" filterUnits="userSpaceOnUse" color-interpolation-filters="sRGB"><feTurbulence type="fractalNoise" baseFrequency="0.042" numOctaves="3" seed="41"/><feColorMatrix type="matrix" values="0 0 0 0 0.867 0 0 0 0 0.706 0 0 0 0 0.667 8 0 0 0 -3.626"/><feComponentTransfer><feFuncA type="discrete" tableValues="0 1"/></feComponentTransfer></filter><filter id="f13" x="1150" y="320" width="480" height="410" filterUnits="userSpaceOnUse" color-interpolation-filters="sRGB"><feTurbulence type="fractalNoise" baseFrequency="0.06" numOctaves="3" seed="42"/><feColorMatrix type="matrix" values="0 0 0 0 0.937 0 0 0 0 0.824 0 0 0 0 0.812 8 0 0 0 -4.415"/><feComponentTransfer><feFuncA type="discrete" tableValues="0 1"/></feComponentTransfer></filter><filter id="f14" x="1150" y="320" width="480" height="410" filterUnits="userSpaceOnUse" color-interpolation-filters="sRGB"><feTurbulence type="fractalNoise" baseFrequency="0.06" numOctaves="3" seed="44"/><feColorMatrix type="matrix" values="0 0 0 0 0.918 0 0 0 0 0.816 0 0 0 0 0.314 8 0 0 0 -4.675"/><feComponentTransfer><feFuncA type="discrete" tableValues="0 1"/></feComponentTransfer></filter><filter id="f15" x="1150" y="320" width="480" height="410" filterUnits="userSpaceOnUse" color-interpolation-filters="sRGB"><feTurbulence type="fractalNoise" baseFrequency="0.06" numOctaves="3" seed="43"/><feColorMatrix type="matrix" values="0 0 0 0 0.455 0 0 0 0 0.667 0 0 0 0 0.604 8 0 0 0 -5.055"/><feComponentTransfer><feFuncA type="discrete" tableValues="0 1"/></feComponentTransfer></filter><filter id="f16" x="1150" y="320" width="480" height="410" filterUnits="userSpaceOnUse" color-interpolation-filters="sRGB"><feTurbulence type="fractalNoise" baseFrequency="0.048" numOctaves="3" seed="51"/><feColorMatrix type="matrix" values="0 0 0 0 0.761 0 0 0 0 0.769 0 0 0 0 0.812 8 0 0 0 -3.702"/><feComponentTransfer><feFuncA type="discrete" tableValues="0 1"/></feComponentTransfer></filter><filter id="f17" x="1150" y="320" width="480" height="410" filterUnits="userSpaceOnUse" color-interpolation-filters="sRGB"><feTurbulence type="fractalNoise" baseFrequency="0.06" numOctaves="3" seed="52"/><feColorMatrix type="matrix" values="0 0 0 0 0.937 0 0 0 0 0.824 0 0 0 0 0.812 8 0 0 0 -4.580"/><feComponentTransfer><feFuncA type="discrete" tableValues="0 1"/></feComponentTransfer></filter><filter id="f18" x="1150" y="320" width="480" height="410" filterUnits="userSpaceOnUse" color-interpolation-filters="sRGB"><feTurbulence type="fractalNoise" baseFrequency="0.06" numOctaves="3" seed="54"/><feColorMatrix type="matrix" values="0 0 0 0 0.753 0 0 0 0 0.678 0 0 0 0 0.290 8 0 0 0 -4.494"/><feComponentTransfer><feFuncA type="discrete" tableValues="0 1"/></feComponentTransfer></filter><filter id="f19" x="1150" y="320" width="480" height="410" filterUnits="userSpaceOnUse" color-interpolation-filters="sRGB"><feTurbulence type="fractalNoise" baseFrequency="0.06" numOctaves="3" seed="53"/><feColorMatrix type="matrix" values="0 0 0 0 0.455 0 0 0 0 0.667 0 0 0 0 0.604 8 0 0 0 -5.055"/><feComponentTransfer><feFuncA type="discrete" tableValues="0 1"/></feComponentTransfer></filter><filter id="f20" x="1150" y="320" width="480" height="410" filterUnits="userSpaceOnUse" color-interpolation-filters="sRGB"><feTurbulence type="fractalNoise" baseFrequency="0.054" numOctaves="3" seed="61"/><feColorMatrix type="matrix" values="0 0 0 0 0.753 0 0 0 0 0.678 0 0 0 0 0.290 8 0 0 0 -4.174"/><feComponentTransfer><feFuncA type="discrete" tableValues="0 1"/></feComponentTransfer></filter><filter id="f21" x="1150" y="320" width="480" height="410" filterUnits="userSpaceOnUse" color-interpolation-filters="sRGB"><feTurbulence type="fractalNoise" baseFrequency="0.06" numOctaves="3" seed="62"/><feColorMatrix type="matrix" values="0 0 0 0 0.937 0 0 0 0 0.824 0 0 0 0 0.812 8 0 0 0 -4.494"/><feComponentTransfer><feFuncA type="discrete" tableValues="0 1"/></feComponentTransfer></filter><filter id="f22" x="1150" y="320" width="480" height="410" filterUnits="userSpaceOnUse" color-interpolation-filters="sRGB"><feTurbulence type="fractalNoise" baseFrequency="0.06" numOctaves="3" seed="65"/><feColorMatrix type="matrix" values="0 0 0 0 0.675 0 0 0 0 0.702 0 0 0 0 0.796 8 0 0 0 -4.905"/><feComponentTransfer><feFuncA type="discrete" tableValues="0 1"/></feComponentTransfer></filter><filter id="f23" x="1150" y="320" width="480" height="410" filterUnits="userSpaceOnUse" color-interpolation-filters="sRGB"><feTurbulence type="fractalNoise" baseFrequency="0.06" numOctaves="3" seed="63"/><feColorMatrix type="matrix" values="0 0 0 0 0.455 0 0 0 0 0.667 0 0 0 0 0.604 8 0 0 0 -4.905"/><feComponentTransfer><feFuncA type="discrete" tableValues="0 1"/></feComponentTransfer></filter><filter id="f24" x="1150" y="320" width="480" height="410" filterUnits="userSpaceOnUse" color-interpolation-filters="sRGB"><feTurbulence type="fractalNoise" baseFrequency="0.06" numOctaves="3" seed="64"/><feColorMatrix type="matrix" values="0 0 0 0 0.918 0 0 0 0 0.816 0 0 0 0 0.314 8 0 0 0 -4.782"/><feComponentTransfer><feFuncA type="discrete" tableValues="0 1"/></feComponentTransfer></filter><filter id="f25" x="1150" y="320" width="480" height="410" filterUnits="userSpaceOnUse" color-interpolation-filters="sRGB"><feTurbulence type="fractalNoise" baseFrequency="0.036" numOctaves="3" seed="71"/><feColorMatrix type="matrix" values="0 0 0 0 0.745 0 0 0 0 0.816 0 0 0 0 0.561 8 0 0 0 -3.374"/><feComponentTransfer><feFuncA type="discrete" tableValues="0 1"/></feComponentTransfer></filter><filter id="f26" x="1150" y="320" width="480" height="410" filterUnits="userSpaceOnUse" color-interpolation-filters="sRGB"><feTurbulence type="fractalNoise" baseFrequency="0.06" numOctaves="3" seed="74"/><feColorMatrix type="matrix" values="0 0 0 0 0.753 0 0 0 0 0.678 0 0 0 0 0.290 8 0 0 0 -4.675"/><feComponentTransfer><feFuncA type="discrete" tableValues="0 1"/></feComponentTransfer></filter><filter id="f27" x="1150" y="320" width="480" height="410" filterUnits="userSpaceOnUse" color-interpolation-filters="sRGB"><feTurbulence type="fractalNoise" baseFrequency="0.054" numOctaves="3" seed="72"/><feColorMatrix type="matrix" values="0 0 0 0 0.455 0 0 0 0 0.667 0 0 0 0 0.604 8 0 0 0 -4.782"/><feComponentTransfer><feFuncA type="discrete" tableValues="0 1"/></feComponentTransfer></filter><filter id="f28" x="1150" y="320" width="480" height="410" filterUnits="userSpaceOnUse" color-interpolation-filters="sRGB"><feTurbulence type="fractalNoise" baseFrequency="0.06" numOctaves="3" seed="73"/><feColorMatrix type="matrix" values="0 0 0 0 0.918 0 0 0 0 0.816 0 0 0 0 0.314 8 0 0 0 -4.905"/><feComponentTransfer><feFuncA type="discrete" tableValues="0 1"/></feComponentTransfer></filter></defs>
<polygon points="1146,315 1634,314 1630,734 1148,738" fill="#f6e5d9"/>
<g stroke="#e8d6c8" stroke-width="1.4" fill="none"><path d="M1219 315 V737"/><path d="M1462 315 V735"/><path d="M1147 527 H1632"/></g>
<polygon points="1159,328.5 1596,328.5 1591.5,719.5 1160.5,722.7" fill="none" stroke="#505050" stroke-width="1.4"/>
<g stroke="#cdbbae" stroke-width="0.8" fill="none" opacity="0.8"><path d="M1165 333.5 H1590 V715.5 H1166 Z"/><path d="M1165 346 H1590"/><path d="M1165 420 H1589"/><path d="M1165 495 H1589"/><path d="M1165 569.5 H1588"/><path d="M1165 644 H1588"/><path d="M1187 333 V716"/><path d="M1247.5 333 V716"/><path d="M1308 333 V716"/><path d="M1369 333 V716"/><path d="M1430 333 V716"/><path d="M1493 333 V716"/><path d="M1555 333 V716"/></g>
<g fill="#a09490"><rect x="1171" y="318" width="46" height="1.2"/><rect x="1166" y="320.5" width="56" height="1.2"/><rect x="1165" y="323" width="59" height="1.2"/><rect x="1167" y="325.5" width="55" height="1"/><rect x="1367" y="318.5" width="22" height="1.2"/><rect x="1548" y="320" width="42" height="1.2"/><rect x="1546" y="322.5" width="46" height="1"/><rect x="1166" y="724.5" width="60" height="1"/><rect x="1166" y="727" width="50" height="1"/><rect x="1166" y="729.5" width="40" height="1"/><rect x="1330" y="727" width="70" height="1"/><rect x="1573" y="723" width="22" height="1"/></g>
<g clip-path="url(#cc)"><rect x="1160" y="330" width="460" height="392" fill="#d3b747"/>
<g mask="url(#znw)">
<rect x="1150" y="320" width="480" height="410" filter="url(#f0)"/>
<rect x="1150" y="320" width="480" height="410" filter="url(#f1)"/>
<rect x="1150" y="320" width="480" height="410" filter="url(#f2)"/>
</g>
<g mask="url(#zgray)">
<rect x="1150" y="320" width="480" height="410" filter="url(#f3)"/>
<rect x="1150" y="320" width="480" height="410" filter="url(#f4)"/>
<rect x="1150" y="320" width="480" height="410" filter="url(#f5)"/>
<rect x="1150" y="320" width="480" height="410" filter="url(#f6)"/>
</g>
<g mask="url(#zsw)">
<rect x="1150" y="320" width="480" height="410" filter="url(#f7)"/>
<rect x="1150" y="320" width="480" height="410" filter="url(#f8)"/>
<rect x="1150" y="320" width="480" height="410" filter="url(#f9)"/>
<rect x="1150" y="320" width="480" height="410" filter="url(#f10)"/>
<rect x="1150" y="320" width="480" height="410" filter="url(#f11)"/>
</g>
<g mask="url(#zcn)">
<rect x="1150" y="320" width="480" height="410" filter="url(#f12)"/>
<rect x="1150" y="320" width="480" height="410" filter="url(#f13)"/>
<rect x="1150" y="320" width="480" height="410" filter="url(#f14)"/>
<rect x="1150" y="320" width="480" height="410" filter="url(#f15)"/>
</g>
<g mask="url(#zne)">
<rect x="1150" y="320" width="480" height="410" filter="url(#f16)"/>
<rect x="1150" y="320" width="480" height="410" filter="url(#f17)"/>
<rect x="1150" y="320" width="480" height="410" filter="url(#f18)"/>
<rect x="1150" y="320" width="480" height="410" filter="url(#f19)"/>
</g>
<g mask="url(#ze)">
<rect x="1150" y="320" width="480" height="410" filter="url(#f20)"/>
<rect x="1150" y="320" width="480" height="410" filter="url(#f21)"/>
<rect x="1150" y="320" width="480" height="410" filter="url(#f22)"/>
<rect x="1150" y="320" width="480" height="410" filter="url(#f23)"/>
<rect x="1150" y="320" width="480" height="410" filter="url(#f24)"/>
</g>
<g mask="url(#zse)">
<rect x="1150" y="320" width="480" height="410" filter="url(#f25)"/>
<rect x="1150" y="320" width="480" height="410" filter="url(#f26)"/>
<rect x="1150" y="320" width="480" height="410" filter="url(#f27)"/>
<rect x="1150" y="320" width="480" height="410" filter="url(#f28)"/>
</g>
<rect x="1150" y="320" width="480" height="410" filter="url(#ct)" opacity="0.16"/>
<g fill="none" stroke="#6fa6b4" stroke-width="4" stroke-linecap="round" opacity="0.9"><path d="M1176 410 Q1190 406 1203 405 Q1222 398 1240 392 Q1255 389 1269 390 Q1285 380 1300 371"/></g>
<g fill="none" stroke="#74aa9a" stroke-width="4" stroke-linecap="round"><path d="M1470 343 Q1462 388 1415 408 Q1372 424 1352 460 Q1340 500 1345 540 Q1350 580 1370 610 Q1390 640 1375 670 Q1360 700 1370 716"/></g>
<path d="M1258 652 Q1280 648 1300 650 Q1330 658 1350 655 Q1370 652 1390 650" fill="none" stroke="#7ab878" stroke-width="3.5"/>
<g fill="none" stroke="#6a6040" stroke-width="0.6" opacity="0.35"><path d="M1220 420 L1330 520 L1460 600 L1560 650"/><path d="M1300 380 L1340 520 L1320 700"/><path d="M1190 570 L1340 520 L1530 350"/><path d="M1340 520 L1490 470"/><path d="M1340 520 L1450 700"/><path d="M1250 640 L1340 520"/><path d="M1180 470 L1340 520"/><path d="M1380 340 L1340 520"/></g>
<ellipse cx="1336" cy="520" rx="9" ry="12" fill="#e8d458" opacity="0.8"/>
</g>
<polygon points="1171.3,389.3 1199.0,393.5 1239.5,381.8 1269.4,374.3 1303.5,370.0 1341.8,356.2 1354.6,347.7 1373.8,339.2 1380.0,339.2 1392.8,335.0 1412.0,339.2 1429.0,333.9 1452.5,337.0 1465.3,340.2 1495.0,345.6 1527.0,347.7 1533.5,341.3 1529.2,354.1 1516.4,379.7 1510.0,396.7 1514.3,405.3 1516.4,422.3 1510.0,430.8 1512.1,447.9 1499.4,464.9 1490.8,482.0 1488.7,494.8 1495.0,511.8 1499.4,541.3 1505.7,569.0 1516.4,592.5 1529.2,605.3 1542.0,618.0 1563.3,635.0 1578.2,645.7 1582.5,658.5 1593.0,669.2 1605.9,686.2 1610.2,696.9 1599.5,703.3 1571.8,701.2 1507.9,702.2 1443.9,702.2 1400.0,702.2 1369.5,705.4 1341.8,711.8 1320.5,716.0 1316.2,703.3 1305.6,686.2 1299.2,669.2 1290.7,658.5 1277.9,645.7 1265.0,635.0 1250.2,622.3 1231.0,611.6 1211.8,615.9 1218.2,601.0 1214.0,586.0 1205.4,569.0 1194.8,552.0 1187.3,534.9 1182.0,520.0 1182.0,511.8 1180.9,490.5 1173.4,469.2 1167.0,452.0 1171.3,430.8 1176.6,413.8 1177.7,398.9" fill="none" stroke="#807a6a" stroke-width="0.7" opacity="0.6"/>
<rect x="1603" y="343.5" width="9" height="6.5" fill="#a6ccd8" stroke="#b8a8a0" stroke-width="0.4"/><rect x="1618" y="343.5" width="9" height="6.5" fill="#c9a93a" stroke="#b8a8a0" stroke-width="0.4"/><rect x="1604.5" y="340.3" width="6" height="1" fill="#a89a92"/><rect x="1619.5" y="340.3" width="6" height="1" fill="#a89a92"/><rect x="1606.5" y="346.0" width="2" height="1.2" fill="#8a7a70" opacity="0.6"/><rect x="1621.5" y="346.0" width="2" height="1.2" fill="#8a7a70" opacity="0.6"/>
<rect x="1603" y="355.4" width="9" height="6.5" fill="#f1d27a" stroke="#b8a8a0" stroke-width="0.4"/><rect x="1618" y="355.4" width="9" height="6.5" fill="#b9a236" stroke="#b8a8a0" stroke-width="0.4"/><rect x="1604.5" y="352.2" width="6" height="1" fill="#a89a92"/><rect x="1619.5" y="352.2" width="6" height="1" fill="#a89a92"/><rect x="1606.5" y="357.9" width="2" height="1.2" fill="#8a7a70" opacity="0.6"/><rect x="1621.5" y="357.9" width="2" height="1.2" fill="#8a7a70" opacity="0.6"/>
<rect x="1603" y="367.2" width="9" height="6.5" fill="#c6b6d6" stroke="#b8a8a0" stroke-width="0.4"/><rect x="1618" y="367.2" width="9" height="6.5" fill="#cbc3d3" stroke="#b8a8a0" stroke-width="0.4"/><rect x="1604.5" y="364.0" width="6" height="1" fill="#a89a92"/><rect x="1619.5" y="364.0" width="6" height="1" fill="#a89a92"/><rect x="1606.5" y="369.7" width="2" height="1.2" fill="#8a7a70" opacity="0.6"/><rect x="1621.5" y="369.7" width="2" height="1.2" fill="#8a7a70" opacity="0.6"/>
<rect x="1603" y="379.1" width="9" height="6.5" fill="#70b2c8" stroke="#b8a8a0" stroke-width="0.4"/><rect x="1618" y="379.1" width="9" height="6.5" fill="#bcc3a4" stroke="#b8a8a0" stroke-width="0.4"/><rect x="1604.5" y="375.9" width="6" height="1" fill="#a89a92"/><rect x="1619.5" y="375.9" width="6" height="1" fill="#a89a92"/><rect x="1606.5" y="381.6" width="2" height="1.2" fill="#8a7a70" opacity="0.6"/><rect x="1621.5" y="381.6" width="2" height="1.2" fill="#8a7a70" opacity="0.6"/>
<rect x="1603" y="390.9" width="9" height="6.5" fill="#c89a7c" stroke="#b8a8a0" stroke-width="0.4"/><rect x="1618" y="390.9" width="9" height="6.5" fill="#efb98c" stroke="#b8a8a0" stroke-width="0.4"/><rect x="1604.5" y="387.7" width="6" height="1" fill="#a89a92"/><rect x="1619.5" y="387.7" width="6" height="1" fill="#a89a92"/><rect x="1606.5" y="393.4" width="2" height="1.2" fill="#8a7a70" opacity="0.6"/><rect x="1621.5" y="393.4" width="2" height="1.2" fill="#8a7a70" opacity="0.6"/>
<rect x="1603" y="402.8" width="9" height="6.5" fill="#9cab7c" stroke="#b8a8a0" stroke-width="0.4"/><rect x="1618" y="402.8" width="9" height="6.5" fill="#e6d8b2" stroke="#b8a8a0" stroke-width="0.4"/><rect x="1604.5" y="399.6" width="6" height="1" fill="#a89a92"/><rect x="1619.5" y="399.6" width="6" height="1" fill="#a89a92"/><rect x="1606.5" y="405.2" width="2" height="1.2" fill="#8a7a70" opacity="0.6"/><rect x="1621.5" y="405.2" width="2" height="1.2" fill="#8a7a70" opacity="0.6"/>
<rect x="1603" y="414.6" width="9" height="6.5" fill="#e7c136" stroke="#b8a8a0" stroke-width="0.4"/><rect x="1618" y="414.6" width="9" height="6.5" fill="#f1e275" stroke="#b8a8a0" stroke-width="0.4"/><rect x="1604.5" y="411.4" width="6" height="1" fill="#a89a92"/><rect x="1619.5" y="411.4" width="6" height="1" fill="#a89a92"/><rect x="1606.5" y="417.1" width="2" height="1.2" fill="#8a7a70" opacity="0.6"/><rect x="1621.5" y="417.1" width="2" height="1.2" fill="#8a7a70" opacity="0.6"/>
<rect x="1603" y="426.4" width="9" height="6.5" fill="#7592ba" stroke="#b8a8a0" stroke-width="0.4"/><rect x="1618" y="426.4" width="9" height="6.5" fill="#c9d995" stroke="#b8a8a0" stroke-width="0.4"/><rect x="1604.5" y="423.2" width="6" height="1" fill="#a89a92"/><rect x="1619.5" y="423.2" width="6" height="1" fill="#a89a92"/><rect x="1606.5" y="428.9" width="2" height="1.2" fill="#8a7a70" opacity="0.6"/><rect x="1621.5" y="428.9" width="2" height="1.2" fill="#8a7a70" opacity="0.6"/>
<rect x="1603" y="438.3" width="9" height="6.5" fill="#72a999" stroke="#b8a8a0" stroke-width="0.4"/><rect x="1618" y="438.3" width="9" height="6.5" fill="#62a18b" stroke="#b8a8a0" stroke-width="0.4"/><rect x="1604.5" y="435.1" width="6" height="1" fill="#a89a92"/><rect x="1619.5" y="435.1" width="6" height="1" fill="#a89a92"/><rect x="1606.5" y="440.8" width="2" height="1.2" fill="#8a7a70" opacity="0.6"/><rect x="1621.5" y="440.8" width="2" height="1.2" fill="#8a7a70" opacity="0.6"/>
<rect x="1603" y="450.1" width="9" height="6.5" fill="#e7c227" stroke="#b8a8a0" stroke-width="0.4"/><rect x="1618" y="450.1" width="9" height="6.5" fill="#efe24a" stroke="#b8a8a0" stroke-width="0.4"/><rect x="1604.5" y="446.9" width="6" height="1" fill="#a89a92"/><rect x="1619.5" y="446.9" width="6" height="1" fill="#a89a92"/><rect x="1606.5" y="452.6" width="2" height="1.2" fill="#8a7a70" opacity="0.6"/><rect x="1621.5" y="452.6" width="2" height="1.2" fill="#8a7a70" opacity="0.6"/>
<rect x="1603" y="462.0" width="9" height="6.5" fill="#e7b2c2" stroke="#b8a8a0" stroke-width="0.4"/><rect x="1618" y="462.0" width="9" height="6.5" fill="#b9a343" stroke="#b8a8a0" stroke-width="0.4"/><rect x="1604.5" y="458.8" width="6" height="1" fill="#a89a92"/><rect x="1619.5" y="458.8" width="6" height="1" fill="#a89a92"/><rect x="1606.5" y="464.5" width="2" height="1.2" fill="#8a7a70" opacity="0.6"/><rect x="1621.5" y="464.5" width="2" height="1.2" fill="#8a7a70" opacity="0.6"/>
<rect x="1603" y="473.9" width="9" height="6.5" fill="#b2d2e0" stroke="#b8a8a0" stroke-width="0.4"/><rect x="1618" y="473.9" width="9" height="6.5" fill="#e0a4ab" stroke="#b8a8a0" stroke-width="0.4"/><rect x="1604.5" y="470.7" width="6" height="1" fill="#a89a92"/><rect x="1619.5" y="470.7" width="6" height="1" fill="#a89a92"/><rect x="1606.5" y="476.4" width="2" height="1.2" fill="#8a7a70" opacity="0.6"/><rect x="1621.5" y="476.4" width="2" height="1.2" fill="#8a7a70" opacity="0.6"/>
<rect x="1603" y="485.7" width="9" height="6.5" fill="#f0c4ca" stroke="#b8a8a0" stroke-width="0.4"/><rect x="1618" y="485.7" width="9" height="6.5" fill="#e8b4b4" stroke="#b8a8a0" stroke-width="0.4"/><rect x="1604.5" y="482.5" width="6" height="1" fill="#a89a92"/><rect x="1619.5" y="482.5" width="6" height="1" fill="#a89a92"/><rect x="1606.5" y="488.2" width="2" height="1.2" fill="#8a7a70" opacity="0.6"/><rect x="1621.5" y="488.2" width="2" height="1.2" fill="#8a7a70" opacity="0.6"/>
<rect x="1603" y="497.5" width="9" height="6.5" fill="#e8d264" stroke="#b8a8a0" stroke-width="0.4"/><rect x="1618" y="497.5" width="9" height="6.5" fill="#bbb3d3" stroke="#b8a8a0" stroke-width="0.4"/><rect x="1604.5" y="494.3" width="6" height="1" fill="#a89a92"/><rect x="1619.5" y="494.3" width="6" height="1" fill="#a89a92"/><rect x="1606.5" y="500.0" width="2" height="1.2" fill="#8a7a70" opacity="0.6"/><rect x="1621.5" y="500.0" width="2" height="1.2" fill="#8a7a70" opacity="0.6"/>
<rect x="1603" y="509.4" width="9" height="6.5" fill="#74b254" stroke="#b8a8a0" stroke-width="0.4"/><rect x="1618" y="509.4" width="9" height="6.5" fill="#9aaac9" stroke="#b8a8a0" stroke-width="0.4"/><rect x="1604.5" y="506.2" width="6" height="1" fill="#a89a92"/><rect x="1619.5" y="506.2" width="6" height="1" fill="#a89a92"/><rect x="1606.5" y="511.9" width="2" height="1.2" fill="#8a7a70" opacity="0.6"/><rect x="1621.5" y="511.9" width="2" height="1.2" fill="#8a7a70" opacity="0.6"/>
<rect x="1603" y="521.2" width="9" height="6.5" fill="#f0d9aa" stroke="#b8a8a0" stroke-width="0.4"/><rect x="1618" y="521.2" width="9" height="6.5" fill="#f0cac8" stroke="#b8a8a0" stroke-width="0.4"/><rect x="1604.5" y="518.0" width="6" height="1" fill="#a89a92"/><rect x="1619.5" y="518.0" width="6" height="1" fill="#a89a92"/><rect x="1606.5" y="523.8" width="2" height="1.2" fill="#8a7a70" opacity="0.6"/><rect x="1621.5" y="523.8" width="2" height="1.2" fill="#8a7a70" opacity="0.6"/>
<rect x="1603" y="533.1" width="9" height="6.5" fill="#7aa4c8" stroke="#b8a8a0" stroke-width="0.4"/><rect x="1618" y="533.1" width="9" height="6.5" fill="#a8cc88" stroke="#b8a8a0" stroke-width="0.4"/><rect x="1604.5" y="529.9" width="6" height="1" fill="#a89a92"/><rect x="1619.5" y="529.9" width="6" height="1" fill="#a89a92"/><rect x="1606.5" y="535.6" width="2" height="1.2" fill="#8a7a70" opacity="0.6"/><rect x="1621.5" y="535.6" width="2" height="1.2" fill="#8a7a70" opacity="0.6"/>
<rect x="1603" y="545.0" width="9" height="6.5" fill="#a8a850" stroke="#b8a8a0" stroke-width="0.4"/><rect x="1618" y="545.0" width="9" height="6.5" fill="#6a9a70" stroke="#b8a8a0" stroke-width="0.4"/><rect x="1604.5" y="541.8" width="6" height="1" fill="#a89a92"/><rect x="1619.5" y="541.8" width="6" height="1" fill="#a89a92"/><rect x="1606.5" y="547.5" width="2" height="1.2" fill="#8a7a70" opacity="0.6"/><rect x="1621.5" y="547.5" width="2" height="1.2" fill="#8a7a70" opacity="0.6"/>
<rect x="1603" y="556.8" width="9" height="6.5" fill="#b8b898" stroke="#b8a8a0" stroke-width="0.4"/><rect x="1618" y="556.8" width="9" height="6.5" fill="#d8b080" stroke="#b8a8a0" stroke-width="0.4"/><rect x="1604.5" y="553.6" width="6" height="1" fill="#a89a92"/><rect x="1619.5" y="553.6" width="6" height="1" fill="#a89a92"/><rect x="1606.5" y="559.3" width="2" height="1.2" fill="#8a7a70" opacity="0.6"/><rect x="1621.5" y="559.3" width="2" height="1.2" fill="#8a7a70" opacity="0.6"/>
<rect x="1603" y="568.6" width="9" height="6.5" fill="#c8d050" stroke="#b8a8a0" stroke-width="0.4"/><rect x="1618" y="568.6" width="9" height="6.5" fill="#e8a830" stroke="#b8a8a0" stroke-width="0.4"/><rect x="1604.5" y="565.4" width="6" height="1" fill="#a89a92"/><rect x="1619.5" y="565.4" width="6" height="1" fill="#a89a92"/><rect x="1606.5" y="571.1" width="2" height="1.2" fill="#8a7a70" opacity="0.6"/><rect x="1621.5" y="571.1" width="2" height="1.2" fill="#8a7a70" opacity="0.6"/>
<rect x="1605" y="584" width="9" height="6.5" fill="#6aaa6a" stroke="#b8a8a0" stroke-width="0.4"/><rect x="1606" y="581" width="7" height="1" fill="#a89a92"/><rect x="1608" y="334.5" width="13" height="1.2" fill="#a09088"/>
<g><rect x="1557" y="440" width="18" height="1" fill="#8a7e78"/><rect x="1561" y="442.5" width="10" height="1" fill="#8a7e78"/><rect x="1562" y="447" width="8" height="1" fill="#9a8e88"/><rect x="1554" y="451" width="22" height="11" fill="#9fb2c4"/><path d="M1555 456 Q1560 452 1565 455 T1575 454" stroke="#506070" stroke-width="0.8" fill="none"/><rect x="1554" y="463.5" width="22" height="1" fill="#9a8e88"/>
<rect x="1553" y="470.0" width="9" height="5" fill="#efe4dc" stroke="#8a8080" stroke-width="0.6"/>
<rect x="1552" y="476.0" width="11" height="0.9" fill="#9a8e88"/>
<rect x="1567" y="470.0" width="9" height="5" fill="#efe4dc" stroke="#8a8080" stroke-width="0.6"/>
<rect x="1566" y="476.0" width="11" height="0.9" fill="#9a8e88"/>
<rect x="1553" y="478.6" width="9" height="5" fill="#efe4dc" stroke="#8a8080" stroke-width="0.6"/>
<rect x="1552" y="484.6" width="11" height="0.9" fill="#9a8e88"/>
<rect x="1567" y="478.6" width="9" height="5" fill="#efe4dc" stroke="#8a8080" stroke-width="0.6"/>
<rect x="1566" y="484.6" width="11" height="0.9" fill="#9a8e88"/>
<rect x="1553" y="487.2" width="9" height="5" fill="#efe4dc" stroke="#8a8080" stroke-width="0.6"/>
<rect x="1552" y="493.2" width="11" height="0.9" fill="#9a8e88"/>
<rect x="1567" y="487.2" width="9" height="5" fill="#efe4dc" stroke="#8a8080" stroke-width="0.6"/>
<rect x="1566" y="493.2" width="11" height="0.9" fill="#9a8e88"/>
<rect x="1553" y="495.8" width="9" height="5" fill="#efe4dc" stroke="#8a8080" stroke-width="0.6"/>
<path d="M1554 499.8 L1557 496.8 L1561 498.8" stroke="#6a6060" stroke-width="0.7" fill="none"/>
<rect x="1552" y="501.8" width="11" height="0.9" fill="#9a8e88"/>
<rect x="1567" y="495.8" width="9" height="5" fill="#efe4dc" stroke="#8a8080" stroke-width="0.6"/>
<path d="M1568 499.8 L1571 496.8 L1575 498.8" stroke="#6a6060" stroke-width="0.7" fill="none"/>
<rect x="1566" y="501.8" width="11" height="0.9" fill="#9a8e88"/>
<rect x="1553" y="504.4" width="9" height="5" fill="#efe4dc" stroke="#8a8080" stroke-width="0.6"/>
<rect x="1552" y="510.4" width="11" height="0.9" fill="#9a8e88"/>
<rect x="1567" y="504.4" width="9" height="5" fill="#efe4dc" stroke="#8a8080" stroke-width="0.6"/>
<rect x="1566" y="510.4" width="11" height="0.9" fill="#9a8e88"/>
<rect x="1553" y="513.0" width="9" height="5" fill="#efe4dc" stroke="#8a8080" stroke-width="0.6"/>
<rect x="1552" y="519.0" width="11" height="0.9" fill="#9a8e88"/>
<rect x="1567" y="513.0" width="9" height="5" fill="#efe4dc" stroke="#8a8080" stroke-width="0.6"/>
<path d="M1568 517.0 L1571 514.0 L1575 516.0" stroke="#6a6060" stroke-width="0.7" fill="none"/>
<rect x="1566" y="519.0" width="11" height="0.9" fill="#9a8e88"/>
<rect x="1553" y="521.6" width="9" height="5" fill="#efe4dc" stroke="#8a8080" stroke-width="0.6"/>
<path d="M1554 525.6 L1557 522.6 L1561 524.6" stroke="#6a6060" stroke-width="0.7" fill="none"/>
<rect x="1552" y="527.6" width="11" height="0.9" fill="#9a8e88"/>
<rect x="1567" y="521.6" width="9" height="5" fill="#efe4dc" stroke="#8a8080" stroke-width="0.6"/>
<path d="M1568 525.6 L1571 522.6 L1575 524.6" stroke="#6a6060" stroke-width="0.7" fill="none"/>
<rect x="1566" y="527.6" width="11" height="0.9" fill="#9a8e88"/>
<rect x="1553" y="530.2" width="9" height="5" fill="#efe4dc" stroke="#8a8080" stroke-width="0.6"/>
<rect x="1552" y="536.2" width="11" height="0.9" fill="#9a8e88"/>
<rect x="1567" y="530.2" width="9" height="5" fill="#efe4dc" stroke="#8a8080" stroke-width="0.6"/>
<rect x="1566" y="536.2" width="11" height="0.9" fill="#9a8e88"/>
<rect x="1553" y="538.8" width="9" height="5" fill="#efe4dc" stroke="#8a8080" stroke-width="0.6"/>
<path d="M1554 542.8 L1557 539.8 L1561 541.8" stroke="#6a6060" stroke-width="0.7" fill="none"/>
<rect x="1552" y="544.8" width="11" height="0.9" fill="#9a8e88"/>
<rect x="1567" y="538.8" width="9" height="5" fill="#efe4dc" stroke="#8a8080" stroke-width="0.6"/>
<path d="M1568 542.8 L1571 539.8 L1575 541.8" stroke="#6a6060" stroke-width="0.7" fill="none"/>
<rect x="1566" y="544.8" width="11" height="0.9" fill="#9a8e88"/>
<rect x="1553" y="547.4" width="9" height="5" fill="#efe4dc" stroke="#8a8080" stroke-width="0.6"/>
<path d="M1554 551.4 L1557 548.4 L1561 550.4" stroke="#6a6060" stroke-width="0.7" fill="none"/>
<rect x="1552" y="553.4" width="11" height="0.9" fill="#9a8e88"/>
<rect x="1567" y="547.4" width="9" height="5" fill="#efe4dc" stroke="#8a8080" stroke-width="0.6"/>
<rect x="1566" y="553.4" width="11" height="0.9" fill="#9a8e88"/>
<rect x="1553" y="556.0" width="9" height="5" fill="#efe4dc" stroke="#8a8080" stroke-width="0.6"/>
<rect x="1552" y="562.0" width="11" height="0.9" fill="#9a8e88"/>
<rect x="1567" y="556.0" width="9" height="5" fill="#efe4dc" stroke="#8a8080" stroke-width="0.6"/>
<path d="M1568 560.0 L1571 557.0 L1575 559.0" stroke="#6a6060" stroke-width="0.7" fill="none"/>
<rect x="1566" y="562.0" width="11" height="0.9" fill="#9a8e88"/>
<rect x="1553" y="564.6" width="9" height="5" fill="#efe4dc" stroke="#8a8080" stroke-width="0.6"/>
<rect x="1552" y="570.6" width="11" height="0.9" fill="#9a8e88"/>
<rect x="1567" y="564.6" width="9" height="5" fill="#efe4dc" stroke="#8a8080" stroke-width="0.6"/>
<path d="M1568 568.6 L1571 565.6 L1575 567.6" stroke="#6a6060" stroke-width="0.7" fill="none"/>
<rect x="1566" y="570.6" width="11" height="0.9" fill="#9a8e88"/>
<rect x="1553" y="573.2" width="9" height="5" fill="#efe4dc" stroke="#8a8080" stroke-width="0.6"/>
<rect x="1552" y="579.2" width="11" height="0.9" fill="#9a8e88"/>
<rect x="1567" y="573.2" width="9" height="5" fill="#efe4dc" stroke="#8a8080" stroke-width="0.6"/>
<path d="M1568 577.2 L1571 574.2 L1575 576.2" stroke="#6a6060" stroke-width="0.7" fill="none"/>
<rect x="1566" y="579.2" width="11" height="0.9" fill="#9a8e88"/>
<rect x="1553" y="581.8" width="9" height="5" fill="#efe4dc" stroke="#8a8080" stroke-width="0.6"/>
<path d="M1554 585.8 L1557 582.8 L1561 584.8" stroke="#6a6060" stroke-width="0.7" fill="none"/>
<rect x="1552" y="587.8" width="11" height="0.9" fill="#9a8e88"/>
<rect x="1567" y="581.8" width="9" height="5" fill="#efe4dc" stroke="#8a8080" stroke-width="0.6"/>
<rect x="1566" y="587.8" width="11" height="0.9" fill="#9a8e88"/>
<rect x="1553" y="590.4" width="9" height="5" fill="#efe4dc" stroke="#8a8080" stroke-width="0.6"/>
<path d="M1554 594.4 L1557 591.4 L1561 593.4" stroke="#6a6060" stroke-width="0.7" fill="none"/>
<rect x="1552" y="596.4" width="11" height="0.9" fill="#9a8e88"/>
<rect x="1567" y="590.4" width="9" height="5" fill="#efe4dc" stroke="#8a8080" stroke-width="0.6"/>
<path d="M1568 594.4 L1571 591.4 L1575 593.4" stroke="#6a6060" stroke-width="0.7" fill="none"/>
<rect x="1566" y="596.4" width="11" height="0.9" fill="#9a8e88"/>
</g>
</svg>
</body></html>
